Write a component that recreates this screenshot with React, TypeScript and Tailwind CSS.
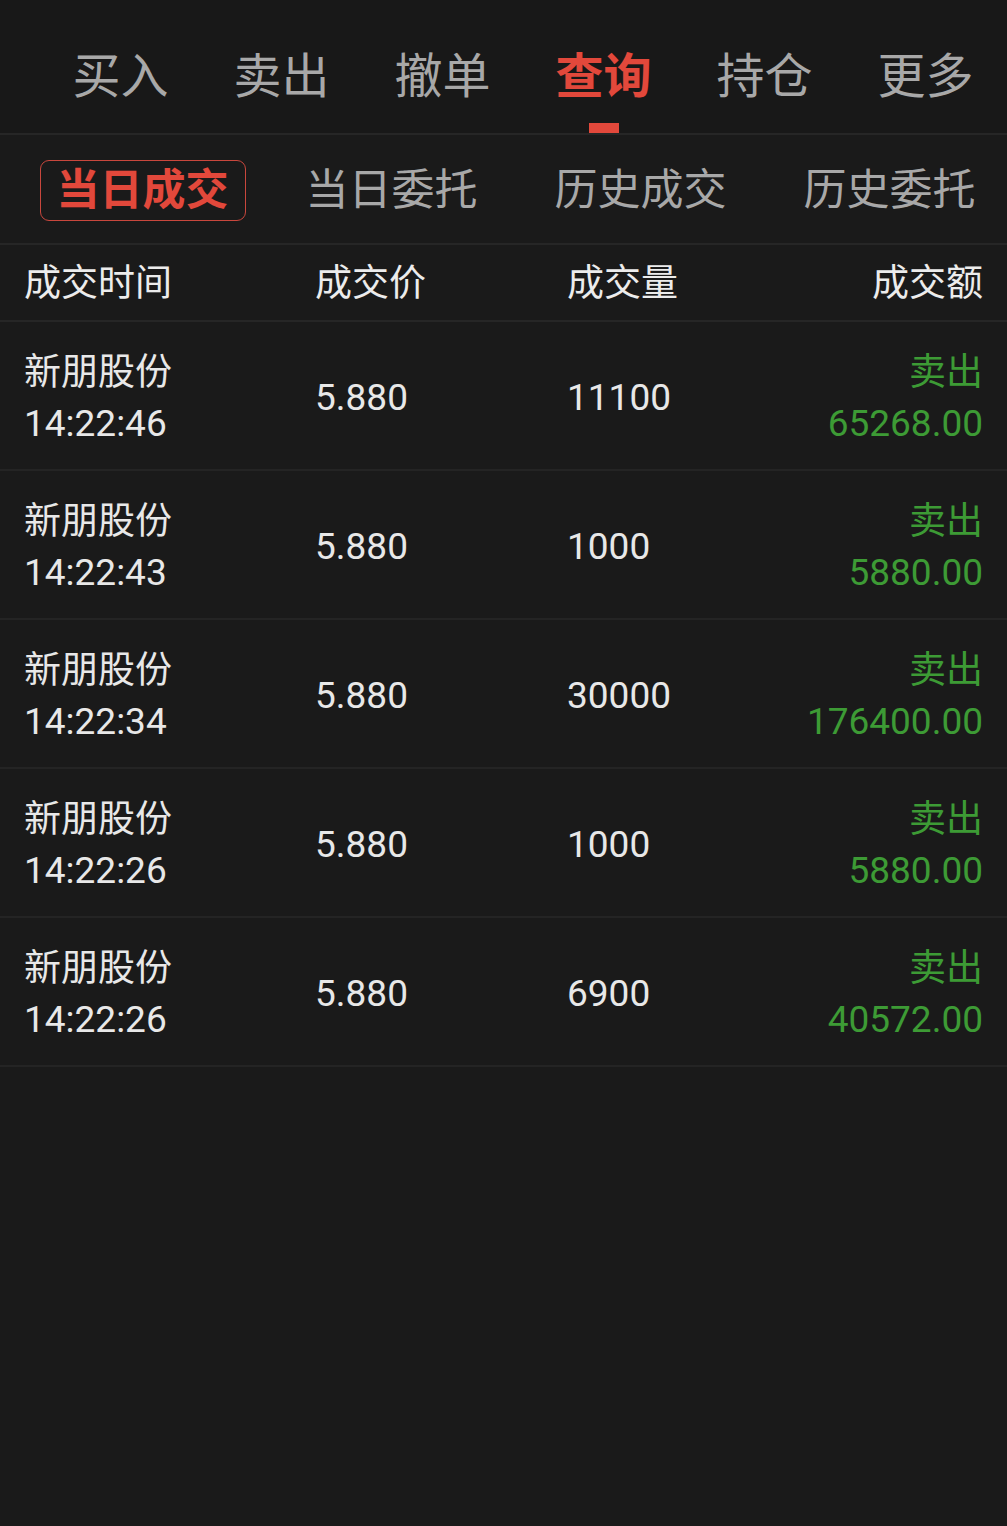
import React from 'react';

const mainTabs = ['买入', '卖出', '撤单', '查询', '持仓', '更多'];
const subTabs = ['当日成交', '当日委托', '历史成交', '历史委托'];

interface Trade {
  name: string;
  time: string;
  price: string;
  volume: string;
  side: string;
  amount: string;
}

const trades: Trade[] = [
  { name: '新朋股份', time: '14:22:46', price: '5.880', volume: '11100', side: '卖出', amount: '65268.00' },
  { name: '新朋股份', time: '14:22:43', price: '5.880', volume: '1000', side: '卖出', amount: '5880.00' },
  { name: '新朋股份', time: '14:22:34', price: '5.880', volume: '30000', side: '卖出', amount: '176400.00' },
  { name: '新朋股份', time: '14:22:26', price: '5.880', volume: '1000', side: '卖出', amount: '5880.00' },
  { name: '新朋股份', time: '14:22:26', price: '5.880', volume: '6900', side: '卖出', amount: '40572.00' },
];

const font = "font-['Roboto','Noto_Sans_CJK_SC',sans-serif]";

const TradeRow = ({ trade }: { trade: Trade }) => (
  <div className="flex flex-col">
    <div className="flex h-[147px] items-center px-[24px] pt-[5px] text-[37px] text-[#e8e8e8]">
      <div className="w-[291px] leading-[51px]">
        <div>{trade.name}</div>
        <div>{trade.time}</div>
      </div>
      <div className="w-[252px]">{trade.price}</div>
      <div className="flex-1">{trade.volume}</div>
      <div className="text-right leading-[51px] text-[#3d9b35]">
        <div>{trade.side}</div>
        <div>{trade.amount}</div>
      </div>
    </div>
    <div className="h-[2px] bg-[#242424]" />
  </div>
);

const App = () => {
  return (
    <div className={`min-h-[1526px] w-full overflow-hidden bg-[#1a1a1a] ${font}`}>
      {/* top tabs */}
      <div className="flex h-[133px] bg-[#181818] pl-[40px]">
        {mainTabs.map((tab) => {
          const active = tab === '查询';
          return (
            <div key={tab} className="flex w-[161px] shrink-0 flex-col items-center pt-[53px]">
              <span
                className={`text-[48px] leading-[48px] ${
                  active ? 'font-bold text-[#e2483b]' : 'text-[#a8a8a8]'
                }`}
              >
                {tab}
              </span>
              <div className={`mt-[22px] h-[10px] w-[30px] ${active ? 'bg-[#e2483b]' : ''}`} />
            </div>
          );
        })}
      </div>
      <div className="h-[2px] bg-[#262626]" />

      {/* sub tabs */}
      <div className="flex h-[108px] items-center overflow-hidden pl-[18px] pt-[2px]">
        {subTabs.map((tab, i) => (
          <div key={tab} className="flex w-[249px] shrink-0 justify-center">
            {i === 0 ? (
              <span className="flex h-[61px] w-[206px] items-center justify-center rounded-[9px] border border-[#c9473d] text-[43px] font-bold text-[#e2483b]">
                {tab}
              </span>
            ) : (
              <span className="text-[43px] text-[#a8a8a8]">{tab}</span>
            )}
          </div>
        ))}
      </div>
      <div className="h-[2px] bg-[#262626]" />

      {/* header */}
      <div className="flex h-[75px] items-center px-[24px] pt-[3px] text-[37px] text-[#ececec]">
        <div className="w-[291px]">成交时间</div>
        <div className="w-[252px]">成交价</div>
        <div className="flex-1">成交量</div>
        <div className="text-right">成交额</div>
      </div>
      <div className="h-[2px] bg-[#262626]" />

      {trades.map((trade, i) => (
        <TradeRow key={i} trade={trade} />
      ))}
    </div>
  );
};

export default App;
